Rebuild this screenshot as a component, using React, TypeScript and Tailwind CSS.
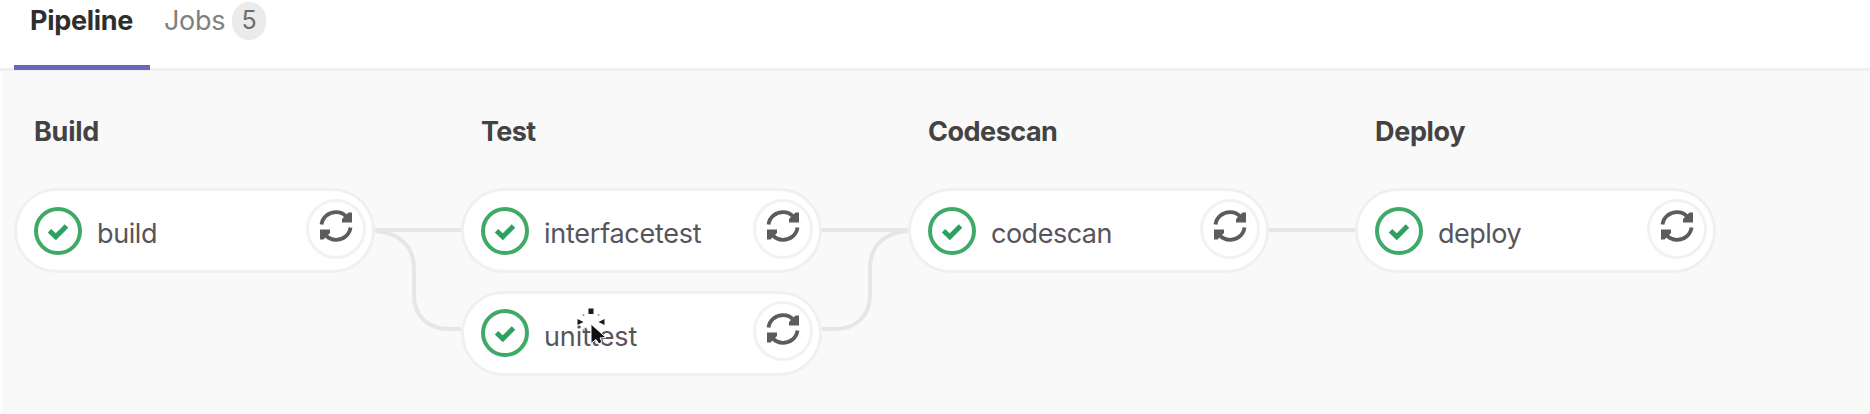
import React from "react";

function StatusIcon() {
  return (
    <svg className="h-12 w-12 shrink-0" viewBox="0 0 48 48" fill="none">
      <circle cx="24" cy="24" r="22" stroke="#3faa67" strokeWidth="4" />
      <path d="M15.5 23.7 L21.8 29.7 L32.5 19" stroke="#2da160" strokeWidth="5" />
    </svg>
  );
}

function RetryIcon() {
  return (
    <svg className="h-8 w-[34px]" viewBox="0 0 34 32" fill="none">
      <path d="M2.500 14.500 C3.500 7 10 2.200 17 2.200 C21.500 2.200 25 4 27.500 7" stroke="#5c5c5c" strokeWidth="3.800" />
      <path d="M31.500 17.500 C30.500 25 24 29.800 17 29.800 C12.500 29.800 9 28 6.500 25" stroke="#5c5c5c" strokeWidth="3.800" />
      <path d="M33 2.500 V12.500 H23 V9 L29.500 2.500 Z" fill="#5c5c5c" />
      <path d="M1 29.500 V19.500 H11 V23 L4.500 29.500 Z" fill="#5c5c5c" />
    </svg>
  );
}

function Pointer() {
  return (
    <svg className="absolute left-[109px] top-[11px] h-[40px] w-[40px]" viewBox="0 0 40 40">
      <circle cx="18" cy="15" r="10" fill="#fff" opacity="0.7" />
      <rect x="15.500" y="3.500" width="5" height="5.500" fill="#1a1a1a" />
      <path d="M4.500 14 L10.500 17 L4.500 20 Z M31.500 14 L25.500 17 L31.500 20 Z" fill="#1a1a1a" />
      <circle cx="10.500" cy="10" r="1" fill="#999" />
      <circle cx="25.500" cy="10" r="1" fill="#999" />
      <circle cx="10.500" cy="25" r="1" fill="#999" />
      <path d="M18 19 V38.500 L23 34.500 L26 39 L29 37 L27 33 L33 32.500 Z" fill="#111" stroke="#fff" strokeWidth="1" />
    </svg>
  );
}

function Job({ name, spacing, pointer = false }: { name: string; spacing: string; pointer?: boolean }) {
  return (
    <div className="relative flex h-[85px] w-[361px] items-center rounded-full border-[3px] border-[#f0f0f2] bg-white pl-[17px] pr-[6px]">
      <StatusIcon />
      <span className={"ml-[15px] mt-[7px] flex-1 whitespace-nowrap text-[27px] leading-8 text-[#57545c] " + spacing}>{name}</span>
      <span className="mb-1 flex h-[60px] w-[60px] items-center justify-center rounded-full border-[3px] border-[#f2f2f3] pb-[5px]">
        <RetryIcon />
      </span>
      {pointer && <Pointer />}
    </div>
  );
}

function Stage({ title, spacing, children }: { title: string; spacing: string; children: React.ReactNode }) {
  return (
    <section className="w-[361px] shrink-0">
      <h2 className={"h-[72px] pl-5 text-[27px] font-bold leading-8 text-[#434343] " + spacing}>{title}</h2>
      <div className="flex flex-col gap-[17.500px]">{children}</div>
    </section>
  );
}

function Connector({ curve }: { curve?: string }) {
  return (
    <svg className="mt-[72px] h-[188px] w-[86px] shrink-0" viewBox="0 0 86 188" fill="none" stroke="#e6e6e7" strokeWidth="4">
      <path d="M0 42 H86" />
      {curve && <path d={curve} />}
    </svg>
  );
}

export default function App() {
  return (
    <main className="flex h-[414px] flex-col overflow-hidden bg-white font-['Inter',sans-serif]">
      <nav className="flex h-[71px] shrink-0 border-b-[3px] border-[#f0f0f0] pl-[14px]">
        <div className="h-[70px] w-[136px] shrink-0 border-b-[5px] border-[#6b66b8] pl-4 pt-[5px] text-[27px] font-bold leading-8 tracking-[-0.300px] text-[#2e2e2e]">
          Pipeline
        </div>
        <div className="flex h-[42px] items-center pl-[14px]">
          <span className="text-[27px] leading-8 tracking-[-0.300px] text-[#808080]">Jobs</span>
          <span className="ml-[7px] flex h-[38px] w-[34px] items-center justify-center rounded-full bg-[#ebebeb] text-[25px] text-[#6e6e6e]">5</span>
        </div>
      </nav>
      <div className="ml-[2px] flex flex-1 bg-[#f9f9f9] pl-3 pt-[45px]">
        <Stage title="Build" spacing="tracking-[-0.250px]">
          <Job name="build" spacing="tracking-[-0.400px]" />
        </Stage>
        <Connector curve="M0 43 C23 44 39 58 39 80 V107 C39 128 53 141 74 141 H86" />
        <Stage title="Test" spacing="tracking-[-0.600px]">
          <Job name="interfacetest" spacing="tracking-[-0.250px]" />
          <Job name="unittest" spacing="tracking-[-0.100px]" pointer />
        </Stage>
        <Connector curve="M0 141 H13 C34 141 48 128 48 107 V80 C48 58 63 44 86 43" />
        <Stage title="Codescan" spacing="tracking-[-0.500px]">
          <Job name="codescan" spacing="tracking-[-0.500px]" />
        </Stage>
        <Connector />
        <Stage title="Deploy" spacing="tracking-[-0.350px]">
          <Job name="deploy" spacing="tracking-[-0.500px]" />
        </Stage>
      </div>
    </main>
  );
}
